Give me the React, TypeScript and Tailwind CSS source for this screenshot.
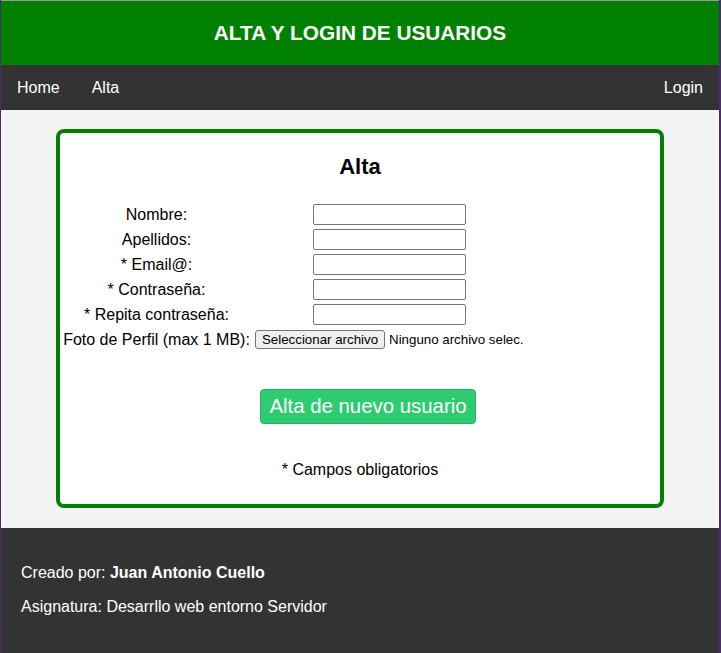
export default function App() {
  const fields = ["Nombre:", "Apellidos:", "* Email@:", "* Contraseña:", "* Repita contraseña:"];

  return (
    <div className="min-h-[653px] bg-[#4b2d6e] pl-px font-['Liberation_Sans',Arial,sans-serif]">
      <div className="w-[718px] min-h-[653px] flex flex-col bg-[#f4f4f4] border-t border-[#9a9a9a]">
        <header className="h-[64px] bg-[#008000] flex items-center justify-center">
          <h1 className="text-white font-bold text-[20.8px] leading-none">ALTA Y LOGIN DE USUARIOS</h1>
        </header>

        <nav className="h-[45px] bg-[#333333] flex items-center text-white text-[16px]">
          <a className="px-4">Home</a>
          <a className="px-4">Alta</a>
          <a className="px-4 ml-auto">Login</a>
        </nav>

        <main className="px-[55px] pt-[19px] pb-[20px]">
          <div className="bg-white border-4 border-[#008000] rounded-[8px] h-[379px] flex flex-col">
            <h2 className="text-center font-bold text-[22px] leading-[25px] pt-[21px] mb-[25px] text-black">Alta</h2>

            <div className="grid grid-cols-[191px_275px] gap-y-[4px] ml-px text-[16px] text-black">
              {fields.map((f) => (
                <div key={f} className="contents">
                  <div className="h-[21px] flex items-center justify-center">{f}</div>
                  <div className="h-[21px] flex justify-center">
                    <input className="w-[153px] h-[21px] border border-[#767676] rounded-[2px] bg-white" />
                  </div>
                </div>
              ))}
              <div className="h-[21px] flex items-center justify-center whitespace-nowrap">Foto de Perfil (max 1 MB):</div>
              <div className="h-[21px] flex items-center pl-[3px] whitespace-nowrap text-[13.3px]">
                <button className="h-[19px] px-[6px] bg-[#efefef] border border-[#767676] rounded-[3px] text-[13.3px] leading-none text-black">
                  Seleccionar archivo
                </button>
                <span className="ml-[4px]">Ninguno archivo selec.</span>
              </div>
            </div>

            <div className="flex justify-center pl-[16px] mt-[39px]">
              <button className="h-[35px] px-[8px] bg-[#2ecc71] border border-[#27ae60] rounded-[4px] text-white text-[20.4px]">
                Alta de nuevo usuario
              </button>
            </div>

            <p className="text-center text-[16px] text-black mt-[34px]">* Campos obligatorios</p>
          </div>
        </main>

        <footer className="flex-1 bg-[#333333] text-white text-[16px] px-5 pt-[36px] pb-6">
          <p className="leading-[18px] mb-[16px]">
            Creado por: <b>Juan Antonio Cuello</b>
          </p>
          <p className="leading-[18px]">Asignatura: Desarrllo web entorno Servidor</p>
        </footer>
      </div>
    </div>
  );
}
